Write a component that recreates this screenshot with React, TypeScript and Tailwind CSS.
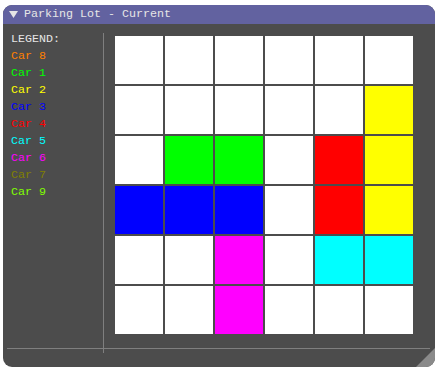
import React from "react";

const W = "bg-white";
const grid: string[][] = [
  [W, W, W, W, W, W],
  [W, W, W, W, W, "bg-[#ffff00]"],
  [W, "bg-[#00ff00]", "bg-[#00ff00]", W, "bg-[#ff0000]", "bg-[#ffff00]"],
  ["bg-[#0000ff]", "bg-[#0000ff]", "bg-[#0000ff]", W, "bg-[#ff0000]", "bg-[#ffff00]"],
  [W, W, "bg-[#ff00ff]", W, "bg-[#00ffff]", "bg-[#00ffff]"],
  [W, W, "bg-[#ff00ff]", W, W, W],
];

const legend: { label: string; cls: string }[] = [
  { label: "Car 8", cls: "text-[#ff8000]" },
  { label: "Car 1", cls: "text-[#00ff00]" },
  { label: "Car 2", cls: "text-[#ffff00]" },
  { label: "Car 3", cls: "text-[#0000ff]" },
  { label: "Car 4", cls: "text-[#ff0000]" },
  { label: "Car 5", cls: "text-[#00ffff]" },
  { label: "Car 6", cls: "text-[#ff00ff]" },
  { label: "Car 7", cls: "text-[#808000]" },
  { label: "Car 9", cls: "text-[#80ff00]" },
];

export default function App() {
  return (
    <div
      className="w-[447px] h-[376px] bg-white pl-[3px] pt-[5px]"
      style={{ fontFamily: '"Liberation Mono", "DejaVu Sans Mono", monospace' }}
    >
      <div className="relative w-[432px] h-[362px] rounded-[9px] bg-[#4c4c4c] overflow-hidden text-[11.67px]">
        <div className="h-[19px] bg-[#6262a0] flex items-center text-[#e6e6e6]">
          <svg width="9" height="8" viewBox="0 0 9 8" className="ml-[6px] mr-[6px]">
            <polygon points="0,0 9,0 4.5,7" fill="#e6e6e6" />
          </svg>
          <span className="leading-[19px] whitespace-pre">Parking Lot - Current</span>
        </div>
        <div className="flex flex-row items-start pt-[7px] h-[329px]">
          <div className="w-[100px] pl-[8px] flex flex-col">
            <div className="h-[17px] leading-[17px] text-[#e6e6e6] whitespace-pre">LEGEND:</div>
            {legend.map((l) => (
              <div key={l.label} className={`h-[17px] leading-[17px] whitespace-pre ${l.cls}`}>
                {l.label}
              </div>
            ))}
          </div>
          <div className="w-px h-[320px] mt-[2px] bg-[#7f7f7f]" />
          <div className="ml-[11px] mt-[5px] grid grid-cols-[repeat(6,48px)] grid-rows-[repeat(6,48px)] gap-[2px]">
            {grid.flat().map((c, i) => (
              <div key={i} className={c} />
            ))}
          </div>
        </div>
        <div className="absolute left-[4px] top-[343px] w-[423px] h-px bg-[#7f7f7f]" />
        <svg className="absolute right-0 bottom-0" width="19" height="19" viewBox="0 0 19 19">
          <polygon points="19,0 19,19 0,19" fill="#8a8a8a" />
        </svg>
      </div>
    </div>
  );
}
